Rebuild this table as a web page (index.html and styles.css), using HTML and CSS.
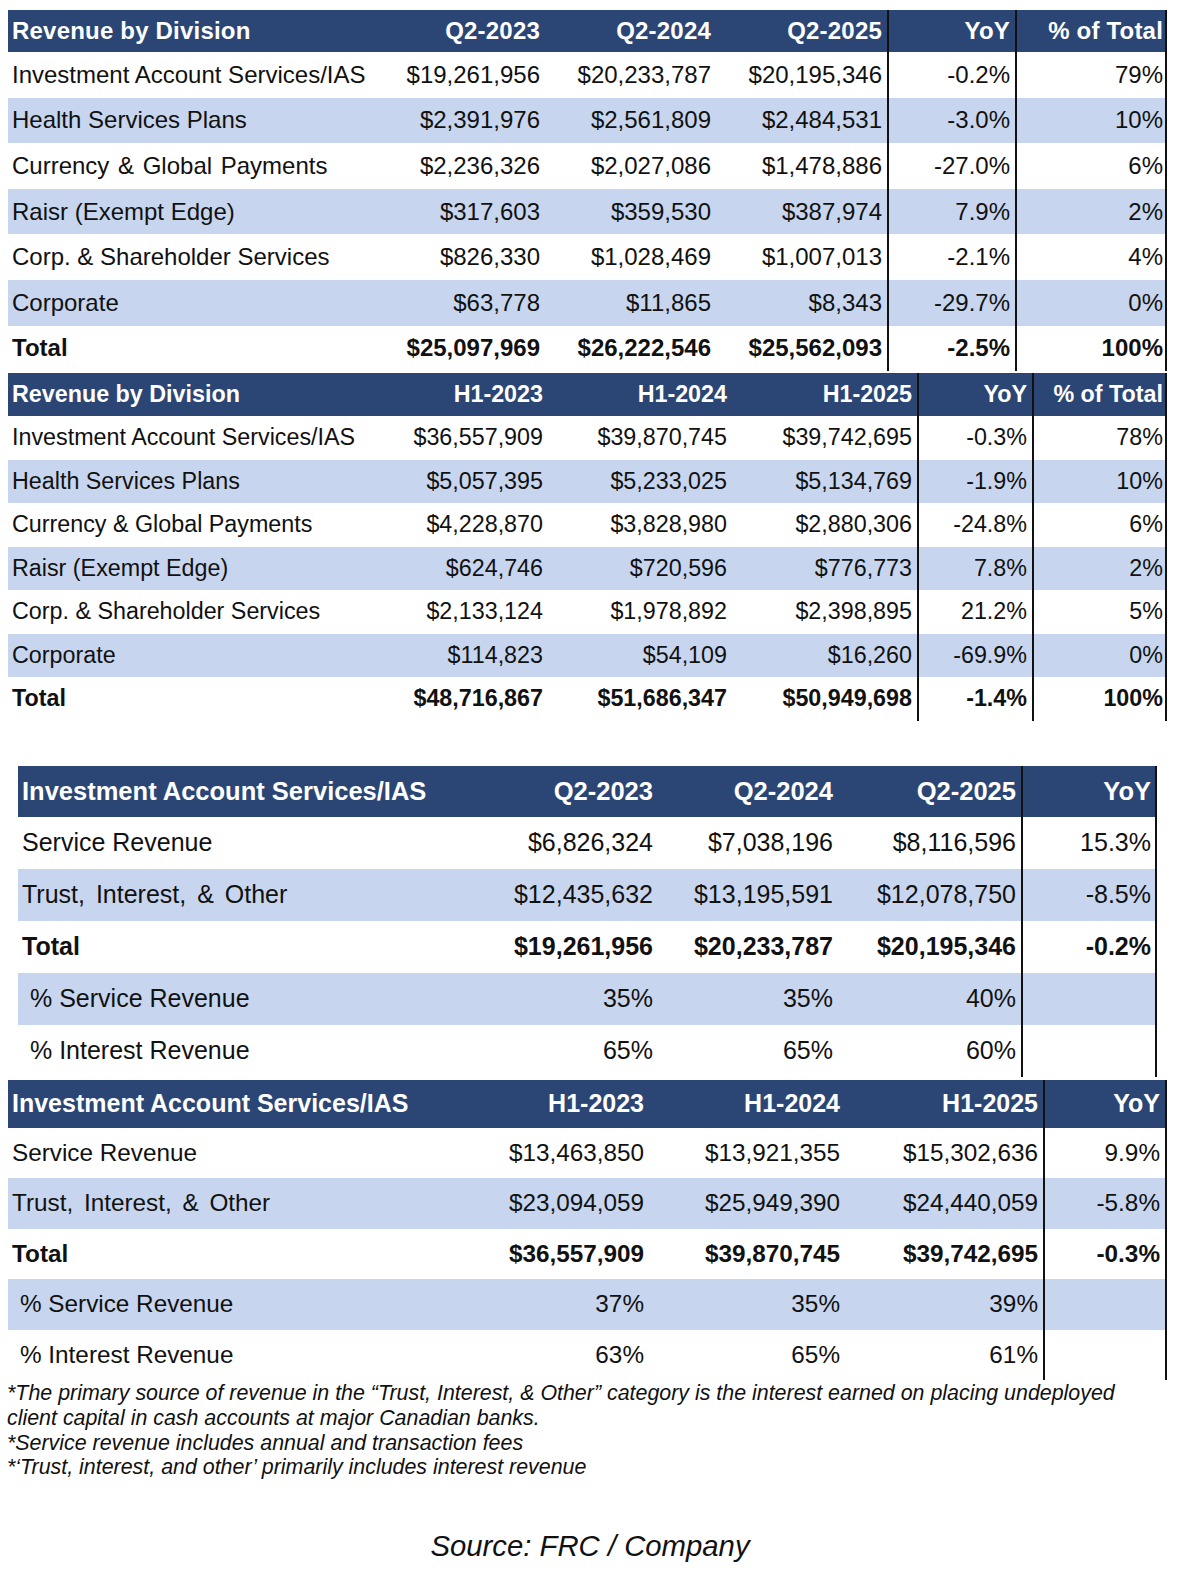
FILE: index.html
```html
<!DOCTYPE html>
<html>
<head>
<meta charset="utf-8">
<link rel="stylesheet" href="styles.css">
</head>
<body>
<div class="page">
  <table class="fin t1">
    <colgroup><col style="width:367px"><col style="width:170px"><col style="width:171px"><col style="width:171px"><col style="width:128px"><col style="width:152px"></colgroup>
    <thead><tr><th class="lbl">Revenue by Division</th><th>Q2-2023</th><th>Q2-2024</th><th>Q2-2025</th><th class="bl">YoY</th><th class="bl br">% of Total</th></tr></thead>
    <tbody>
      <tr><td class="lbl">Investment Account Services/IAS</td><td>$19,261,956</td><td>$20,233,787</td><td>$20,195,346</td><td class="bl">-0.2%</td><td class="bl br">79%</td></tr>
      <tr class="alt"><td class="lbl">Health Services Plans</td><td>$2,391,976</td><td>$2,561,809</td><td>$2,484,531</td><td class="bl">-3.0%</td><td class="bl br">10%</td></tr>
      <tr><td class="lbl wide1">Currency &amp; Global Payments</td><td>$2,236,326</td><td>$2,027,086</td><td>$1,478,886</td><td class="bl">-27.0%</td><td class="bl br">6%</td></tr>
      <tr class="alt"><td class="lbl">Raisr (Exempt Edge)</td><td>$317,603</td><td>$359,530</td><td>$387,974</td><td class="bl">7.9%</td><td class="bl br">2%</td></tr>
      <tr><td class="lbl">Corp. &amp; Shareholder Services</td><td>$826,330</td><td>$1,028,469</td><td>$1,007,013</td><td class="bl">-2.1%</td><td class="bl br">4%</td></tr>
      <tr class="alt"><td class="lbl">Corporate</td><td>$63,778</td><td>$11,865</td><td>$8,343</td><td class="bl">-29.7%</td><td class="bl br">0%</td></tr>
      <tr class="tot"><td class="lbl">Total</td><td>$25,097,969</td><td>$26,222,546</td><td>$25,562,093</td><td class="bl">-2.5%</td><td class="bl br">100%</td></tr>
    </tbody>
  </table>

  <table class="fin t2">
    <colgroup><col style="width:354px"><col style="width:186px"><col style="width:184px"><col style="width:185px"><col style="width:115px"><col style="width:135px"></colgroup>
    <thead><tr><th class="lbl">Revenue by Division</th><th>H1-2023</th><th>H1-2024</th><th>H1-2025</th><th class="bl">YoY</th><th class="bl br">% of Total</th></tr></thead>
    <tbody>
      <tr><td class="lbl">Investment Account Services/IAS</td><td>$36,557,909</td><td>$39,870,745</td><td>$39,742,695</td><td class="bl">-0.3%</td><td class="bl br">78%</td></tr>
      <tr class="alt"><td class="lbl">Health Services Plans</td><td>$5,057,395</td><td>$5,233,025</td><td>$5,134,769</td><td class="bl">-1.9%</td><td class="bl br">10%</td></tr>
      <tr><td class="lbl">Currency &amp; Global Payments</td><td>$4,228,870</td><td>$3,828,980</td><td>$2,880,306</td><td class="bl">-24.8%</td><td class="bl br">6%</td></tr>
      <tr class="alt"><td class="lbl">Raisr (Exempt Edge)</td><td>$624,746</td><td>$720,596</td><td>$776,773</td><td class="bl">7.8%</td><td class="bl br">2%</td></tr>
      <tr><td class="lbl">Corp. &amp; Shareholder Services</td><td>$2,133,124</td><td>$1,978,892</td><td>$2,398,895</td><td class="bl">21.2%</td><td class="bl br">5%</td></tr>
      <tr class="alt"><td class="lbl">Corporate</td><td>$114,823</td><td>$54,109</td><td>$16,260</td><td class="bl">-69.9%</td><td class="bl br">0%</td></tr>
      <tr class="tot"><td class="lbl">Total</td><td>$48,716,867</td><td>$51,686,347</td><td>$50,949,698</td><td class="bl">-1.4%</td><td class="bl br">100%</td></tr>
    </tbody>
  </table>

  <table class="fin t3">
    <colgroup><col style="width:462px"><col style="width:178px"><col style="width:180px"><col style="width:183px"><col style="width:136px"></colgroup>
    <thead><tr><th class="lbl">Investment Account Services/IAS</th><th>Q2-2023</th><th>Q2-2024</th><th>Q2-2025</th><th class="bl br">YoY</th></tr></thead>
    <tbody>
      <tr><td class="lbl">Service Revenue</td><td>$6,826,324</td><td>$7,038,196</td><td>$8,116,596</td><td class="bl br">15.3%</td></tr>
      <tr class="alt"><td class="lbl wide">Trust, Interest, &amp; Other</td><td>$12,435,632</td><td>$13,195,591</td><td>$12,078,750</td><td class="bl br">-8.5%</td></tr>
      <tr class="tot"><td class="lbl">Total</td><td>$19,261,956</td><td>$20,233,787</td><td>$20,195,346</td><td class="bl br">-0.2%</td></tr>
      <tr class="alt"><td class="lbl ind">% Service Revenue</td><td>35%</td><td>35%</td><td>40%</td><td class="bl br"></td></tr>
      <tr><td class="lbl ind">% Interest Revenue</td><td>65%</td><td>65%</td><td>60%</td><td class="bl br"></td></tr>
    </tbody>
  </table>

  <table class="fin t4">
    <colgroup><col style="width:442px"><col style="width:199px"><col style="width:196px"><col style="width:198px"><col style="width:124px"></colgroup>
    <thead><tr><th class="lbl">Investment Account Services/IAS</th><th>H1-2023</th><th>H1-2024</th><th>H1-2025</th><th class="bl br">YoY</th></tr></thead>
    <tbody>
      <tr><td class="lbl">Service Revenue</td><td>$13,463,850</td><td>$13,921,355</td><td>$15,302,636</td><td class="bl br">9.9%</td></tr>
      <tr class="alt"><td class="lbl wide">Trust, Interest, &amp; Other</td><td>$23,094,059</td><td>$25,949,390</td><td>$24,440,059</td><td class="bl br">-5.8%</td></tr>
      <tr class="tot"><td class="lbl">Total</td><td>$36,557,909</td><td>$39,870,745</td><td>$39,742,695</td><td class="bl br">-0.3%</td></tr>
      <tr class="alt"><td class="lbl ind">% Service Revenue</td><td>37%</td><td>35%</td><td>39%</td><td class="bl br"></td></tr>
      <tr><td class="lbl ind">% Interest Revenue</td><td>63%</td><td>65%</td><td>61%</td><td class="bl br"></td></tr>
    </tbody>
  </table>

  <div class="notes">
    <p>*The primary source of revenue in the “Trust, Interest, &amp; Other” category is the interest earned on placing undeployed client capital in cash accounts at major Canadian banks.</p>
    <p>*Service revenue includes annual and transaction fees</p>
    <p>*‘Trust, interest, and other’ primarily includes interest revenue</p>
  </div>

  <p class="source">Source: FRC / Company</p>
</div>
</body>
</html>
```

FILE: styles.css
```css
* { box-sizing: border-box; }
html, body { margin: 0; padding: 0; background: #fff; }
body { font-family: "Liberation Sans", Arial, sans-serif; color: #111; }
.page { padding: 10px 0 0 8px; width: 1180px; }

.fin {
  border-collapse: separate;
  border-spacing: 0;
  table-layout: fixed;
  width: 1159px;
}
.fin th, .fin td {
  padding: 0 5px 0 4px;
  text-align: right;
  white-space: nowrap;
  overflow: visible;
  vertical-align: middle;
}
.fin th {
  background: #2b4674;
  color: #fff;
  font-weight: bold;
}
.fin .lbl { text-align: left; }
.fin .ind { padding-left: 12px; }
.fin .wide { word-spacing: 4px; }
.fin .wide1 { word-spacing: 2px; }
.fin tr.alt td { background: #c7d6ee; }
.fin tr.tot td { font-weight: bold; }
.fin .bl { border-left: 2px solid #111; }
.fin .br { border-right: 2px solid #111; padding-right: 2px; }

.t1 th, .t1 td { font-size: 24px; }
.t1 th { height: 42px; letter-spacing: 0.2px; }
.t1 td { height: 45.6px; }

.t2 { margin-top: 2px; }
.t2 th, .t2 td { font-size: 23.3px; padding-right: 5px; }
.t2 .br { padding-right: 2px; }
.t2 th { height: 43px; }
.t2 td { height: 43.5px; }

.t3 { margin: 45px 0 0 10px; width: 1139px; }
.t3 th, .t3 td { font-size: 25px; }
.t3 th { height: 51px; font-size: 25.5px; }
.t3 td { height: 52px; }
.t3 .br { padding-right: 4px; }

.t4 { margin-top: 3px; }
.t4 th, .t4 td { font-size: 24.3px; }
.t4 th { height: 48px; font-size: 25px; }
.t4 td { height: 50.5px; }
.t4 .br { padding-right: 5px; }

.notes {
  margin: 1px 0 0 -1px;
  width: 1140px;
  font-style: italic;
  font-size: 21.4px;
  line-height: 24.7px;
}
.notes p { margin: 0; }

.source {
  margin: 48px 0 0 -8px;
  width: 1180px;
  text-align: center;
  font-style: italic;
  font-size: 29.3px;
  line-height: 36px;
}
```
